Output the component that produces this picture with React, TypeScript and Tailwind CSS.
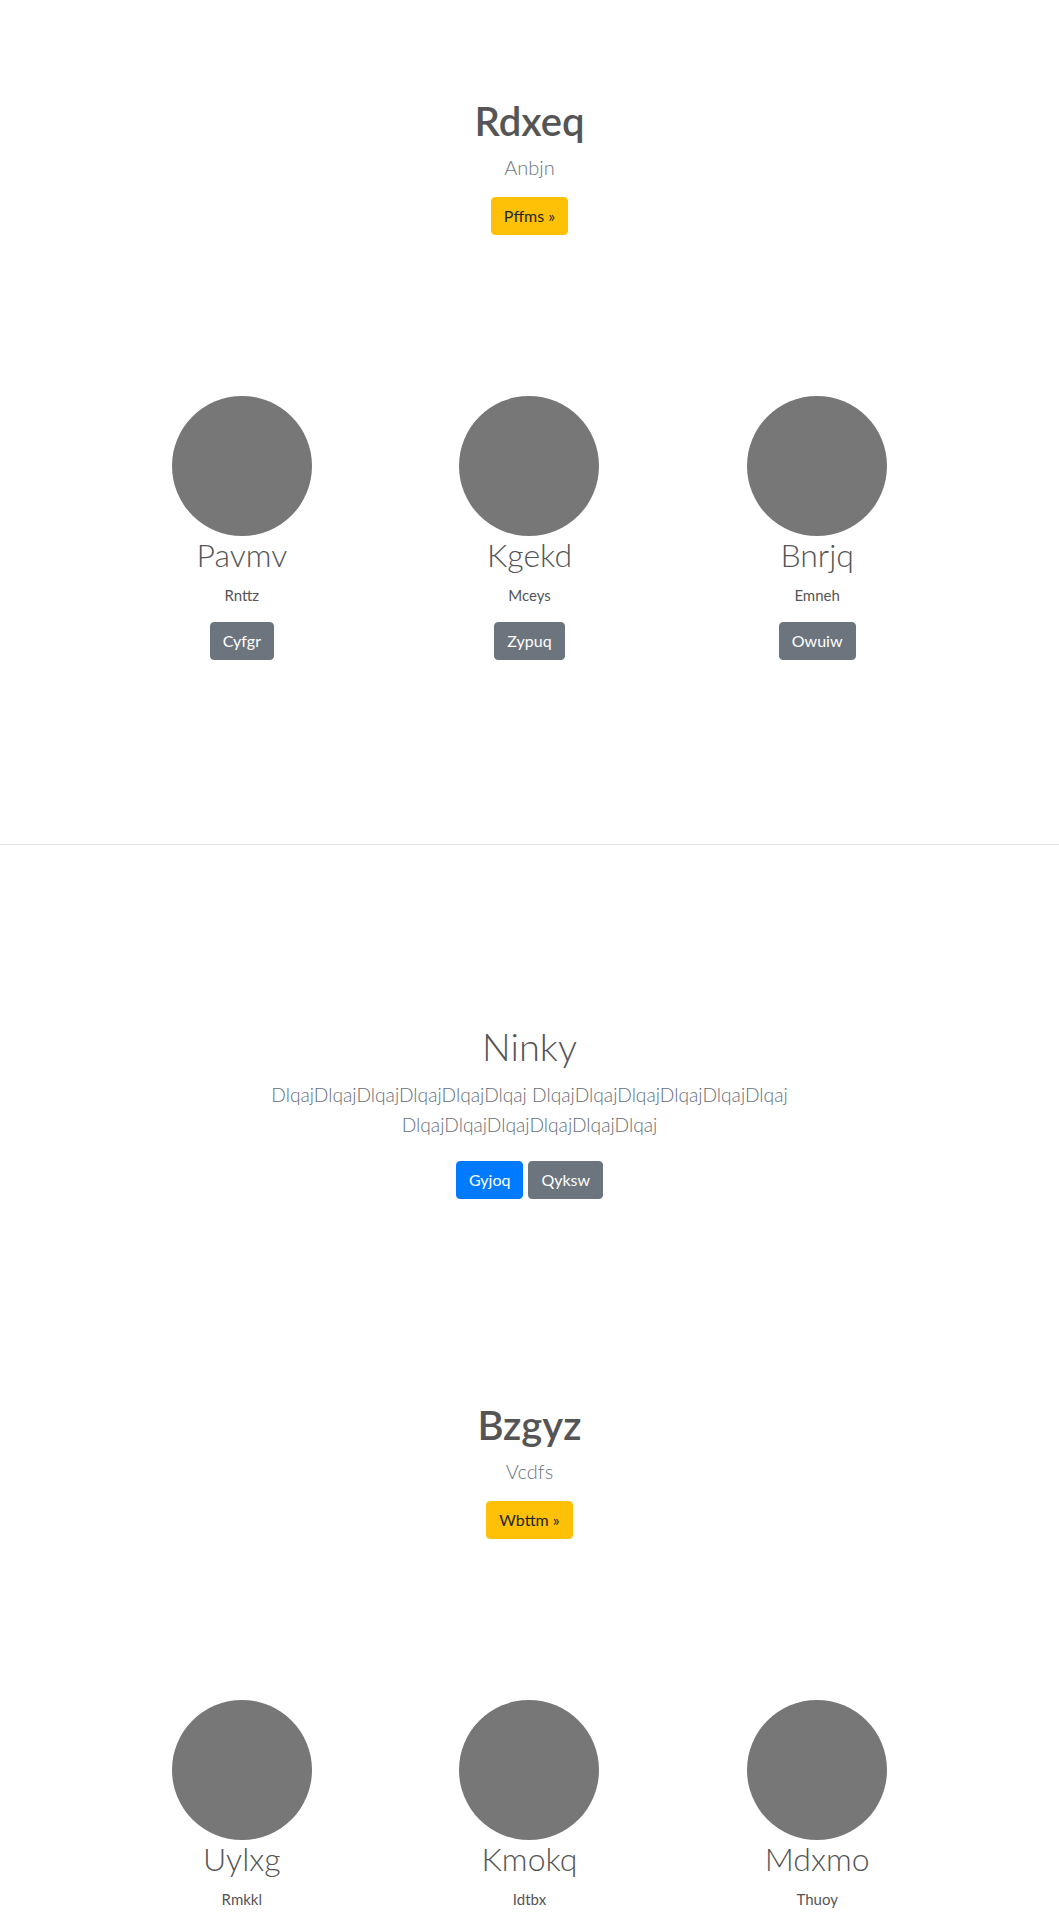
import React from "react";

type Person = { name: string; role: string; cta?: string };

const teamOne: Person[] = [
  { name: "Pavmv", role: "Rnttz", cta: "Cyfgr" },
  { name: "Kgekd", role: "Mceys", cta: "Zypuq" },
  { name: "Bnrjq", role: "Emneh", cta: "Owuiw" },
];

const teamTwo: Person[] = [
  { name: "Uylxg", role: "Rmkkl" },
  { name: "Kmokq", role: "Idtbx" },
  { name: "Mdxmo", role: "Thuoy" },
];

const lead = "DlqajDlqajDlqajDlqajDlqajDlqaj";

function Hero({ title, subtitle, cta, className = "" }: { title: string; subtitle: string; cta: string; className?: string }) {
  return (
    <section className={`text-center ${className}`}>
      <h1 className="text-[40px] leading-[48px] font-semibold text-[#555]">{title}</h1>
      <p className="mt-[7px] text-[20px] leading-[30px] font-light text-[#6c757d]">{subtitle}</p>
      <a
        href="#"
        className="mt-[15px] inline-block rounded border border-[#ffc107] bg-[#ffc107] px-3 py-[6px] text-base leading-6 text-[#212529]"
      >
        {cta}
      </a>
    </section>
  );
}

function Team({ people, className = "" }: { people: Person[]; className?: string }) {
  return (
    <section className={`mx-auto grid w-[863px] grid-cols-3 ${className}`}>
      {people.map((p) => (
        <div key={p.name} className="flex flex-col items-center text-center">
          <div className="h-[140px] w-[140px] rounded-full bg-[#777]" />
          <h2 className="text-[32px] leading-[38px] font-light text-[#555]">{p.name}</h2>
          <p className="mt-[10px] text-[15px] leading-[22px] text-[#555]">{p.role}</p>
          {p.cta && (
            <a
              href="#"
              className="mt-4 inline-block rounded border border-[#6c757d] bg-[#6c757d] px-3 py-[6px] text-base leading-6 text-white"
            >
              {p.cta}
            </a>
          )}
        </div>
      ))}
    </section>
  );
}

function Jumbo({ className = "" }: { className?: string }) {
  return (
    <section className={`text-center ${className}`}>
      <div className="mx-auto max-w-[610px]">
        <h1 className="text-[38px] leading-[48px] font-light text-[#555]">Ninky</h1>
        <p className="mt-[10px] text-[19.2px] leading-[30px] font-light text-[#67707a]">
          {lead} {lead} {lead}
        </p>
        <div className="mt-[21px] flex justify-center gap-[5px]">
          <a href="#" className="rounded border border-[#007bff] bg-[#007bff] px-3 py-[6px] text-base leading-6 text-white">
            Gyjoq
          </a>
          <a href="#" className="rounded border border-[#6c757d] bg-[#6c757d] px-3 py-[6px] text-base leading-6 text-white">
            Qyksw
          </a>
        </div>
      </div>
    </section>
  );
}

export default function App() {
  return (
    <div className="min-h-screen bg-white font-['Lato',sans-serif]">
      <Hero title="Rdxeq" subtitle="Anbjn" cta="Pffms »" className="pt-[97px]" />
      <Team people={teamOne} className="mt-[161px]" />

      <hr className="mt-[184px] border-t border-[#e5e5e5]" />

      <Jumbo className="mt-[177px]" />

      <Hero title="Bzgyz" subtitle="Vcdfs" cta="Wbttm »" className="mt-[202px]" />
      <Team people={teamTwo} className="mt-[161px]" />
    </div>
  );
}
